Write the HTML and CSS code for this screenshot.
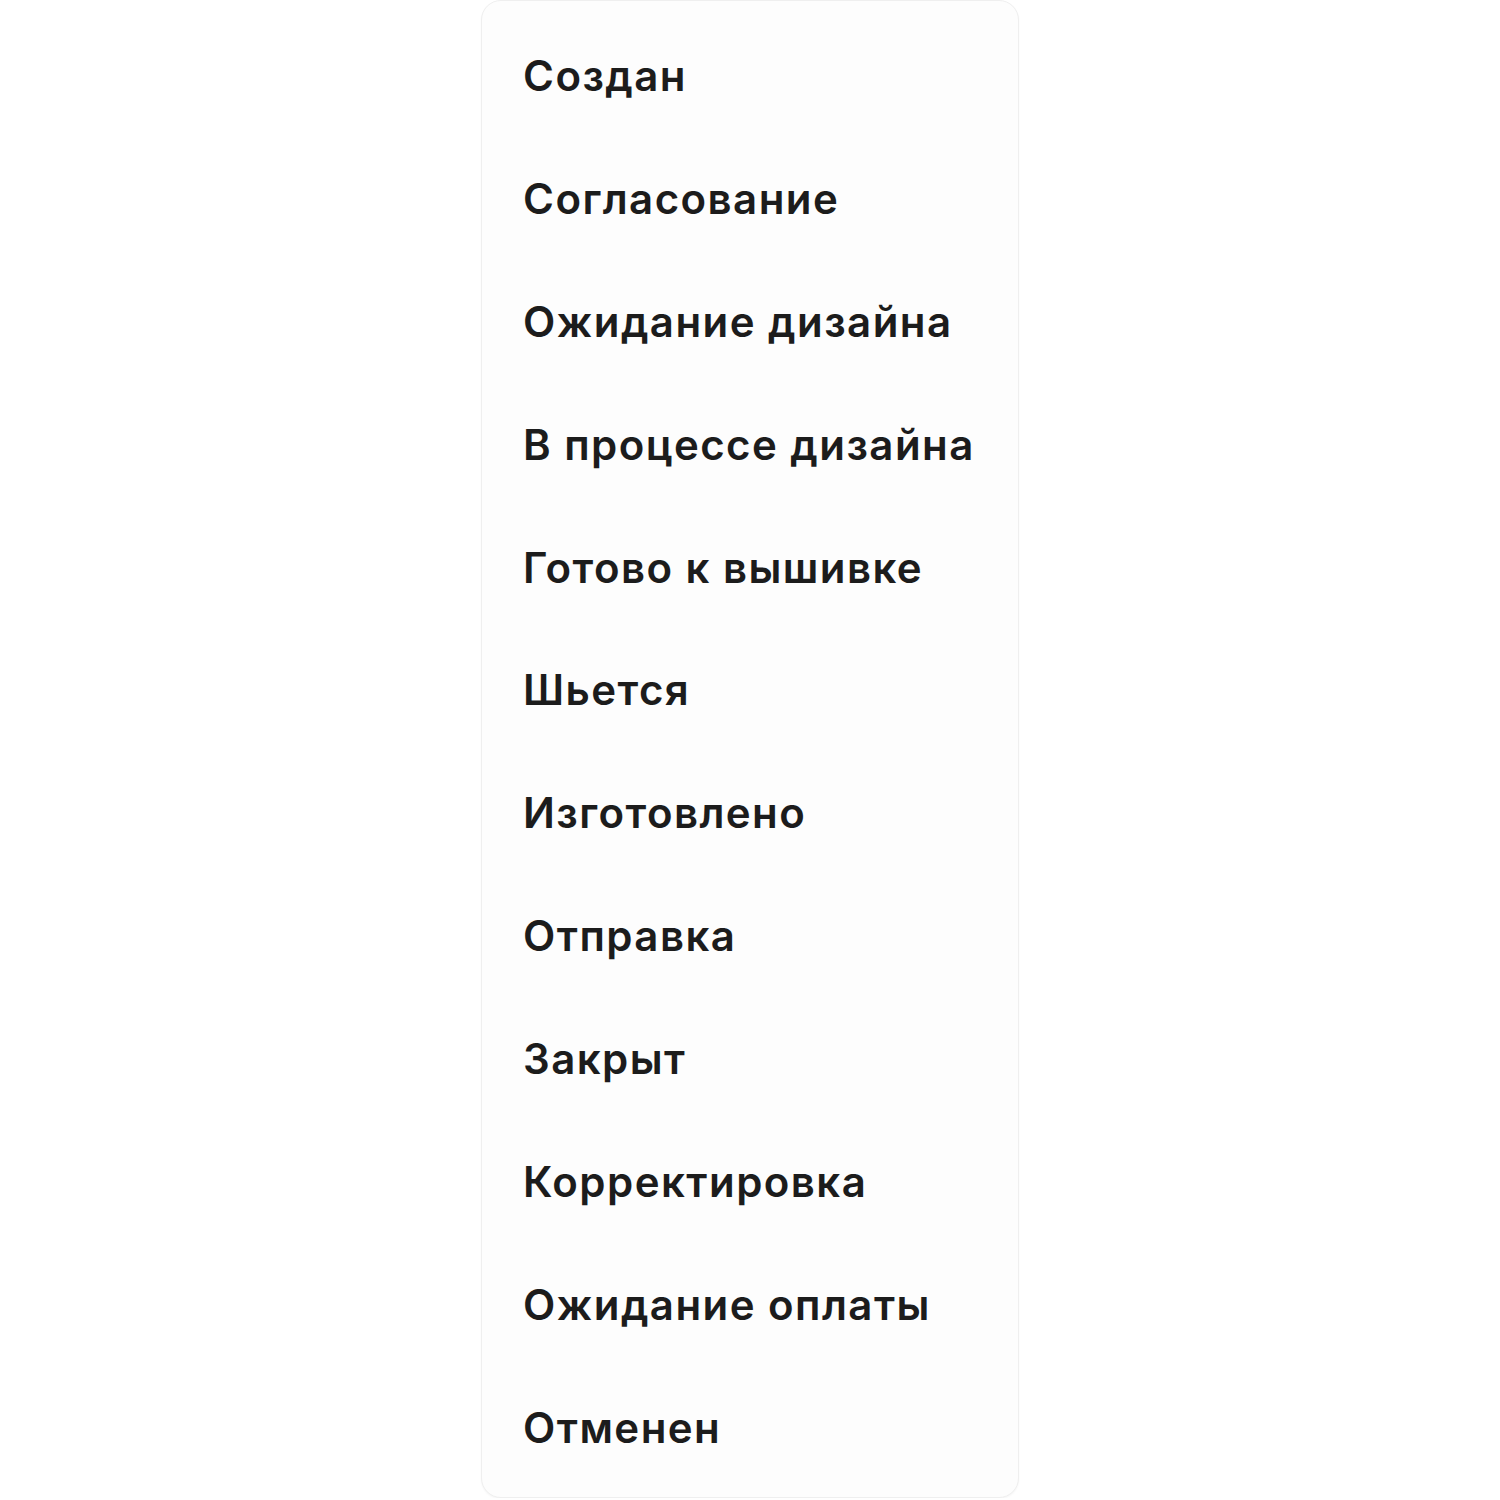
FILE: index.html
```html
<!DOCTYPE html>
<html lang="ru">
<head>
<meta charset="utf-8">
<title>Статусы заказа</title>
<link rel="stylesheet" href="styles.css">
</head>
<body>
<div class="page">
  <ul class="status-menu">
    <li class="status-item">Создан</li>
    <li class="status-item">Согласование</li>
    <li class="status-item">Ожидание дизайна</li>
    <li class="status-item">В процессе дизайна</li>
    <li class="status-item">Готово к вышивке</li>
    <li class="status-item">Шьется</li>
    <li class="status-item">Изготовлено</li>
    <li class="status-item">Отправка</li>
    <li class="status-item">Закрыт</li>
    <li class="status-item">Корректировка</li>
    <li class="status-item">Ожидание оплаты</li>
    <li class="status-item">Отменен</li>
  </ul>
</div>
</body>
</html>
```

FILE: styles.css
```css
html, body {
  margin: 0;
  padding: 0;
  background: #ffffff;
}

.page {
  display: flex;
  justify-content: center;
}

.status-menu {
  list-style: none;
  margin: 0;
  width: 538px;
  box-sizing: border-box;
  height: 1498px;
  padding: 13px 0 0 0;
  background: #fdfdfd;
  border: 1px solid #efefef;
  border-radius: 20px;
  box-shadow: 0 1px 2px rgba(0, 0, 0, 0.04);
  font-family: Inter, "Noto Sans", sans-serif;
  font-weight: 600;
  font-size: 42px;
  color: #1c1c1c;
}

.status-item {
  height: 122.9px;
  display: flex;
  align-items: center;
  padding-left: 41px;
  letter-spacing: 1.45px;
}
```
